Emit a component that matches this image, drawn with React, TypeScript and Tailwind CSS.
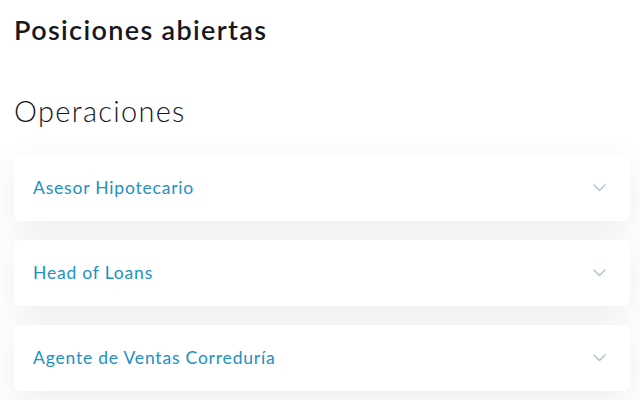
const jobs = ['Asesor Hipotecario', 'Head of Loans', 'Agente de Ventas Correduría'];

function Chevron() {
  return (
    <svg width="13" height="8" viewBox="0 0 13 8" fill="none" className="text-[#b3c5d1]">
      <path d="M1 1l5.5 5.5L12 1" stroke="currentColor" strokeWidth="1.5" strokeLinecap="round" strokeLinejoin="round" />
    </svg>
  );
}

export default function App() {
  return (
    <div className="min-h-[400px] bg-white pl-[14px] pr-[10px] pt-[12px] font-['Lato','Open_Sans',sans-serif] text-[#16181d]">
      <h1 className="text-[27px] font-semibold leading-[36px] tracking-[1.35px]">Posiciones abiertas</h1>
      <h2 className="mt-[43px] text-[29px] font-light leading-[40px] tracking-[1.3px]">Operaciones</h2>
      <div className="mt-[24px] flex flex-col gap-[19px]">
        {jobs.map((job) => (
          <div
            key={job}
            className="flex h-[66px] items-center justify-between rounded-md bg-white pl-[19px] pr-[24px] shadow-[0_10px_35px_rgba(0,0,0,0.075)]"
          >
            <span className="text-[17.5px] tracking-[0.8px] text-[#2191c2]">{job}</span>
            <Chevron />
          </div>
        ))}
      </div>
    </div>
  );
}
